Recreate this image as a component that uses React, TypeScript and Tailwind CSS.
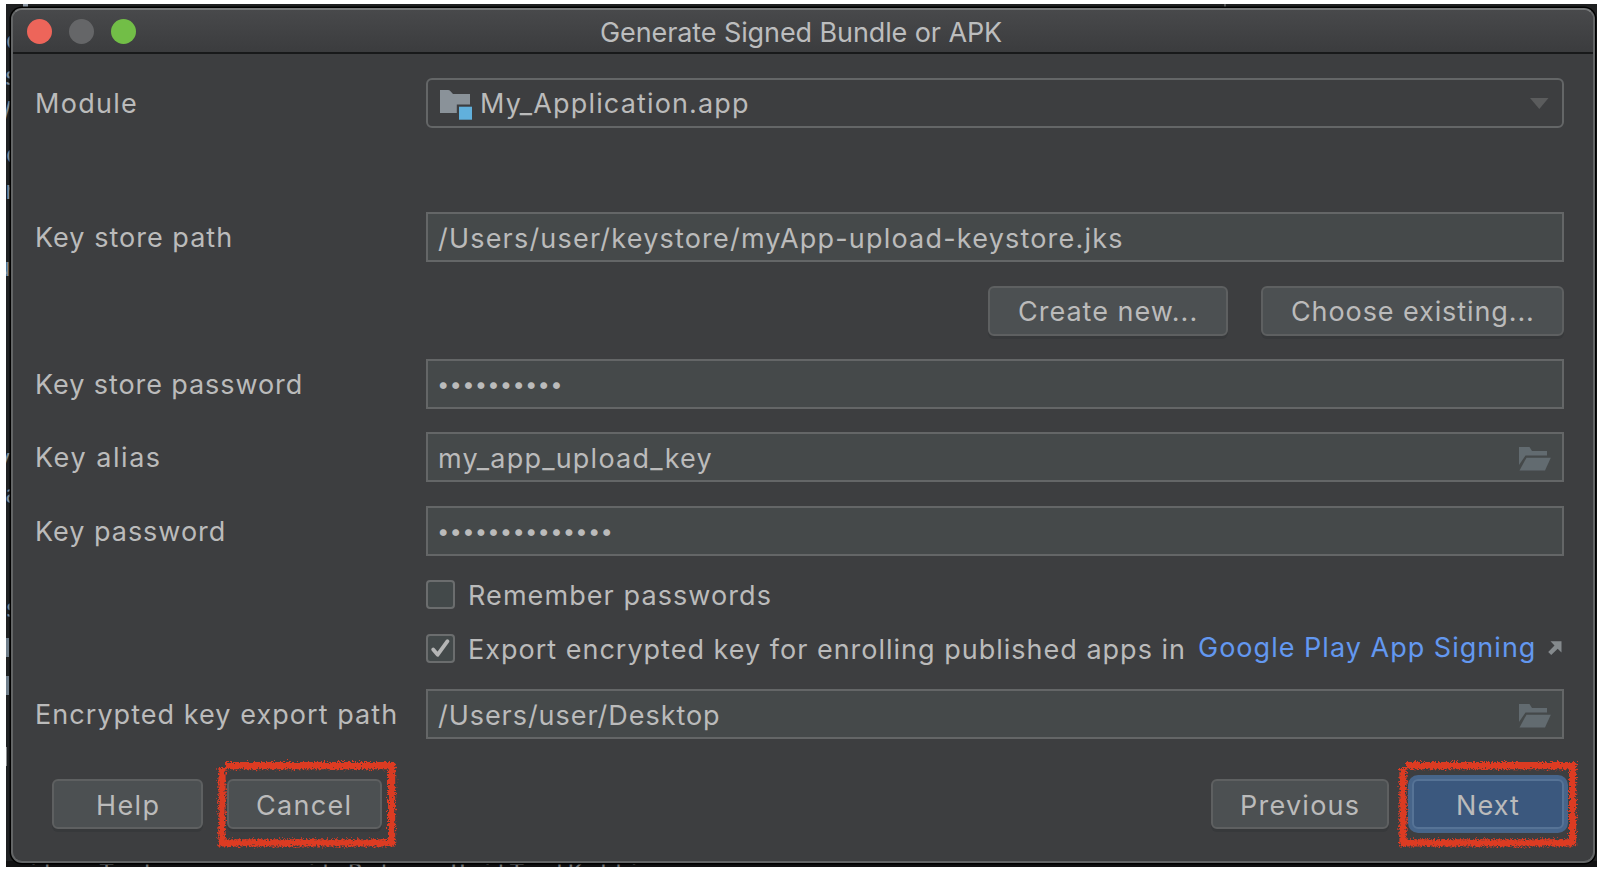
import React, { type ReactNode } from "react";

const BUTTON =
  "flex h-[50px] shrink-0 items-center rounded-[6px] border-2 border-[#5e6061] bg-[#4c5052] shadow-[0_3px_0_#37393b] whitespace-nowrap";

function Row({ label, className, children }: { label?: ReactNode; className: string; children: ReactNode }) {
  return (
    <div className={`flex items-center ${className}`}>
      <div className="w-[391px] shrink-0 pt-[2px] whitespace-nowrap">{label}</div>
      {children}
    </div>
  );
}

function Field({ children, browse }: { children: ReactNode; browse?: boolean }) {
  return (
    <div className="flex h-[50px] w-[1138px] items-center justify-between border-2 border-[#646667] bg-[#45494a] pr-[11px] pl-[10px]">
      <div className="pt-[3px] whitespace-nowrap">{children}</div>
      {browse && (
        <svg width="32" height="24" viewBox="0 0 32 24" fill="#626b70" className="mt-[3px]">
          <path d="M0 0H10.5L13 4H28V8.5H6.5L0 18Z" />
          <path d="M7.5 10.7H31.8L26 23.5H.5Z" />
        </svg>
      )}
    </div>
  );
}

function Checkbox({ checked }: { checked?: boolean }) {
  return (
    <div className="flex size-[29px] shrink-0 items-center justify-center rounded-[4px] border-2 border-[#6b6d6e] bg-[#43494a]">
      {checked && (
        <svg width="25" height="25" viewBox="0 0 25 25" fill="none">
          <path d="M5.200 13.500L9.700 18.700L19.500 5.200" stroke="#b4b5b5" strokeWidth="3.8" strokeLinecap="round" strokeLinejoin="round" />
        </svg>
      )}
    </div>
  );
}

function Marker({ className, seed }: { className: string; seed: number }) {
  const id = `rough-${seed}`;
  return (
    <svg className={`pointer-events-none absolute ${className}`} width="184" height="92" viewBox="0 0 184 92" fill="none">
      <filter id={id} x="0" y="0" width="184" height="92" filterUnits="userSpaceOnUse">
        <feTurbulence type="fractalNoise" baseFrequency="0.6" numOctaves="3" seed={seed} />
        <feDisplacementMap in="SourceGraphic" scale="7" xChannelSelector="R" yChannelSelector="G" />
      </filter>
      <path
        d="M9 6.700H179M175.600 3.500V87M179 83.800H2.500M6 87V9"
        stroke="#dc3a24"
        strokeWidth="7.2"
        filter={`url(#${id})`}
      />
    </svg>
  );
}

function EditorBackdrop() {
  return (
    <div className="absolute inset-0 font-['DejaVu_Sans_Mono',monospace] text-[24.3px] leading-[30px] text-[#7d8b99]">
      <span className="absolute top-[22px] left-[-1px]">c</span>
      <span className="absolute top-[58px] left-[-2px]">s</span>
      <span className="absolute top-[92px] left-[-9px]">V</span>
      <span className="absolute top-[136px] left-[-1px]">c</span>
      <span className="absolute top-[172px] left-[-3px]">r</span>
      <span className="absolute top-[249px] left-[-10px]">u</span>
      <span className="absolute top-[440px] left-[-10px]">y</span>
      <span className="absolute top-[476px] left-[-1px]">a</span>
      <span className="absolute top-[590px] left-[-1px]">s</span>
      <span className="absolute top-[634px] left-0 h-[19px] w-[3px] bg-[#6f7d89]" />
      <span className="absolute top-[672px] left-0 h-[19px] w-[3px] bg-[#6f7d89]" />
      <span className="absolute top-[743px] left-0 h-[19px] w-px bg-[#8a8b8c]" />
      <span className="absolute top-0 left-[17px] h-[3px] w-[5px] bg-[#8d98a5]" />
      <span className="absolute top-0 left-[1218px] h-[3px] w-[2px] bg-[#555657]" />
      <div className="absolute inset-x-0 bottom-0 h-[6px] overflow-hidden bg-[#111112]">
        <div className="pl-[20px] text-[24.3px] leading-[24px] tracking-[0.02px] whitespace-pre text-[#747576]">
          {"il   Task :app:compileReleaseUnitTestKotlin"}
        </div>
      </div>
    </div>
  );
}

export default function App() {
  return (
    <div className="h-[872px] w-[1598px] overflow-hidden bg-white pt-[4px] pl-[6px] font-['Inter','Liberation_Sans',sans-serif] text-[27px] leading-[32px] text-[#bbbbbb]">
      <div className="relative h-[863px] w-[1591px] overflow-hidden bg-[#1f2021] pt-[4px] pl-[5px]">
        <EditorBackdrop />
        <div className="relative h-[855px] w-[1584px] rounded-[11px] border-2 border-[#636566] border-t-[#77797a] bg-[#3d3e40] shadow-[0_0_0_1.5px_#000]">
          <header className="flex h-[44px] items-center rounded-t-[9px] border-b-2 border-[#18191a] bg-linear-to-b from-[#48494b] to-[#3b3c3e] pl-[14px]">
            <div className="flex gap-[17px]">
              <span className="size-[25px] rounded-full bg-[#ed655a]" />
              <span className="size-[25px] rounded-full bg-[#656668]" />
              <span className="size-[25px] rounded-full bg-[#72be47]" />
            </div>
            <h1 className="ml-[464px] pt-[3px] font-normal tracking-[-0.1px] whitespace-nowrap text-[#bcbdbe]">
              Generate Signed Bundle or APK
            </h1>
          </header>

          <main className="pl-[22px]">
            <Row className="mt-[24px]" label={<span className="tracking-[1.3px]">Module</span>}>
              <div className="flex h-[50px] w-[1138px] items-center rounded-[6px] border-2 border-[#646667] pl-[12px]">
                <svg width="33" height="30" viewBox="0 0 33 30" className="mt-[3px] shrink-0">
                  <path d="M0 0H8Q9.500 0 10.500 1.200L13 4H30V14.500H16.800V23H0Z" fill="#8a9299" />
                  <path d="M19 16.700H32V29.700H19Z" fill="#61b0dc" />
                </svg>
                <span className="ml-[7px] pt-[2px] tracking-[1.15px]">My_Application.app</span>
                <svg width="19" height="11" viewBox="0 0 19 11" className="mt-px mr-[13px] ml-auto">
                  <path d="M0 0H18.500L9.300 11Z" fill="#5b5c5d" />
                </svg>
              </div>
            </Row>

            <Row className="mt-[84px]" label={<span className="tracking-[1.02px]">Key store path</span>}>
              <Field>
                <span className="tracking-[1.2px]">/Users/user/keystore/myApp-upload-keystore.jks</span>
              </Field>
            </Row>

            <div className="mt-[24px] flex w-[1529px] justify-end gap-[33px]">
              <button className={`${BUTTON} w-[240px] pt-[2px] pl-[28px] tracking-[1px]`}>Create new...</button>
              <button className={`${BUTTON} w-[303px] pt-[2px] pl-[28px] tracking-[0.9px]`}>Choose existing...</button>
            </div>

            <Row className="mt-[23px]" label={<span className="tracking-[0.92px]">Key store password</span>}>
              <Field>
                <span className="-mt-[4px] -ml-px block text-[22px] tracking-[0.2px]">••••••••••</span>
              </Field>
            </Row>

            <Row className="mt-[23px]" label={<span className="tracking-[1.55px]">Key alias</span>}>
              <Field browse>
                <span className="tracking-[1.22px]">my_app_upload_key</span>
              </Field>
            </Row>

            <Row className="mt-[24px]" label={<span className="tracking-[0.98px]">Key password</span>}>
              <Field>
                <span className="-mt-[4px] -ml-px block text-[22px] tracking-[0.2px]">••••••••••••••</span>
              </Field>
            </Row>

            <Row className="mt-[22px] h-[32px]">
              <Checkbox />
              <span className="ml-[13px] pt-[3px] tracking-[1.08px]">Remember passwords</span>
            </Row>

            <Row className="mt-[22px] h-[32px]">
              <Checkbox checked />
              <span className="ml-[13px] pt-[3px] tracking-[1px] whitespace-nowrap">
                Export encrypted key for enrolling published apps in
              </span>
              <a className="ml-[12px] tracking-[1.02px] whitespace-nowrap text-[#6398f0]">Google Play App Signing</a>
              <svg width="14" height="14" viewBox="0 0 14 14" className="ml-[12px]">
                <path d="M2.500 .3H13.500V11.500L9.700 7.700L3.200 14L.2 11L6.500 4.400Z" fill="#858a8d" />
              </svg>
            </Row>

            <Row className="mt-[25px]" label={<span className="tracking-[1.05px]">Encrypted key export path</span>}>
              <Field browse>
                <span className="tracking-[0.95px]">/Users/user/Desktop</span>
              </Field>
            </Row>

            <footer className="mt-[35px] flex h-[60px] items-center pl-[17px]">
              <button className={`${BUTTON} w-[151px] pt-[3px] pl-[42px] tracking-[1.4px]`}>Help</button>
              <div className="relative ml-[24px]">
                <button className={`${BUTTON} w-[155px] pt-[3px] pl-[27px] tracking-[1.3px]`}>Cancel</button>
                <Marker className="top-[-20px] left-[-11px]" seed={3} />
              </div>
              <button className={`${BUTTON} ml-[829px] w-[178px] pt-[3px] pl-[27px] tracking-[1.25px]`}>Previous</button>
              <div className="relative ml-[19px]">
                <button className="flex h-[58px] w-[160px] rounded-[10px] border-[4px] border-[#47658a] bg-[#47658a]">
                  <span className="flex h-full w-full items-center rounded-[6px] border-2 border-[#567396] bg-[#3b587e] pt-[3px] pl-[42px] tracking-[1.09px]">
                    Next
                  </span>
                </button>
                <Marker className="top-[-16px] left-[-11px]" seed={8} />
              </div>
            </footer>
          </main>
        </div>
      </div>
    </div>
  );
}
